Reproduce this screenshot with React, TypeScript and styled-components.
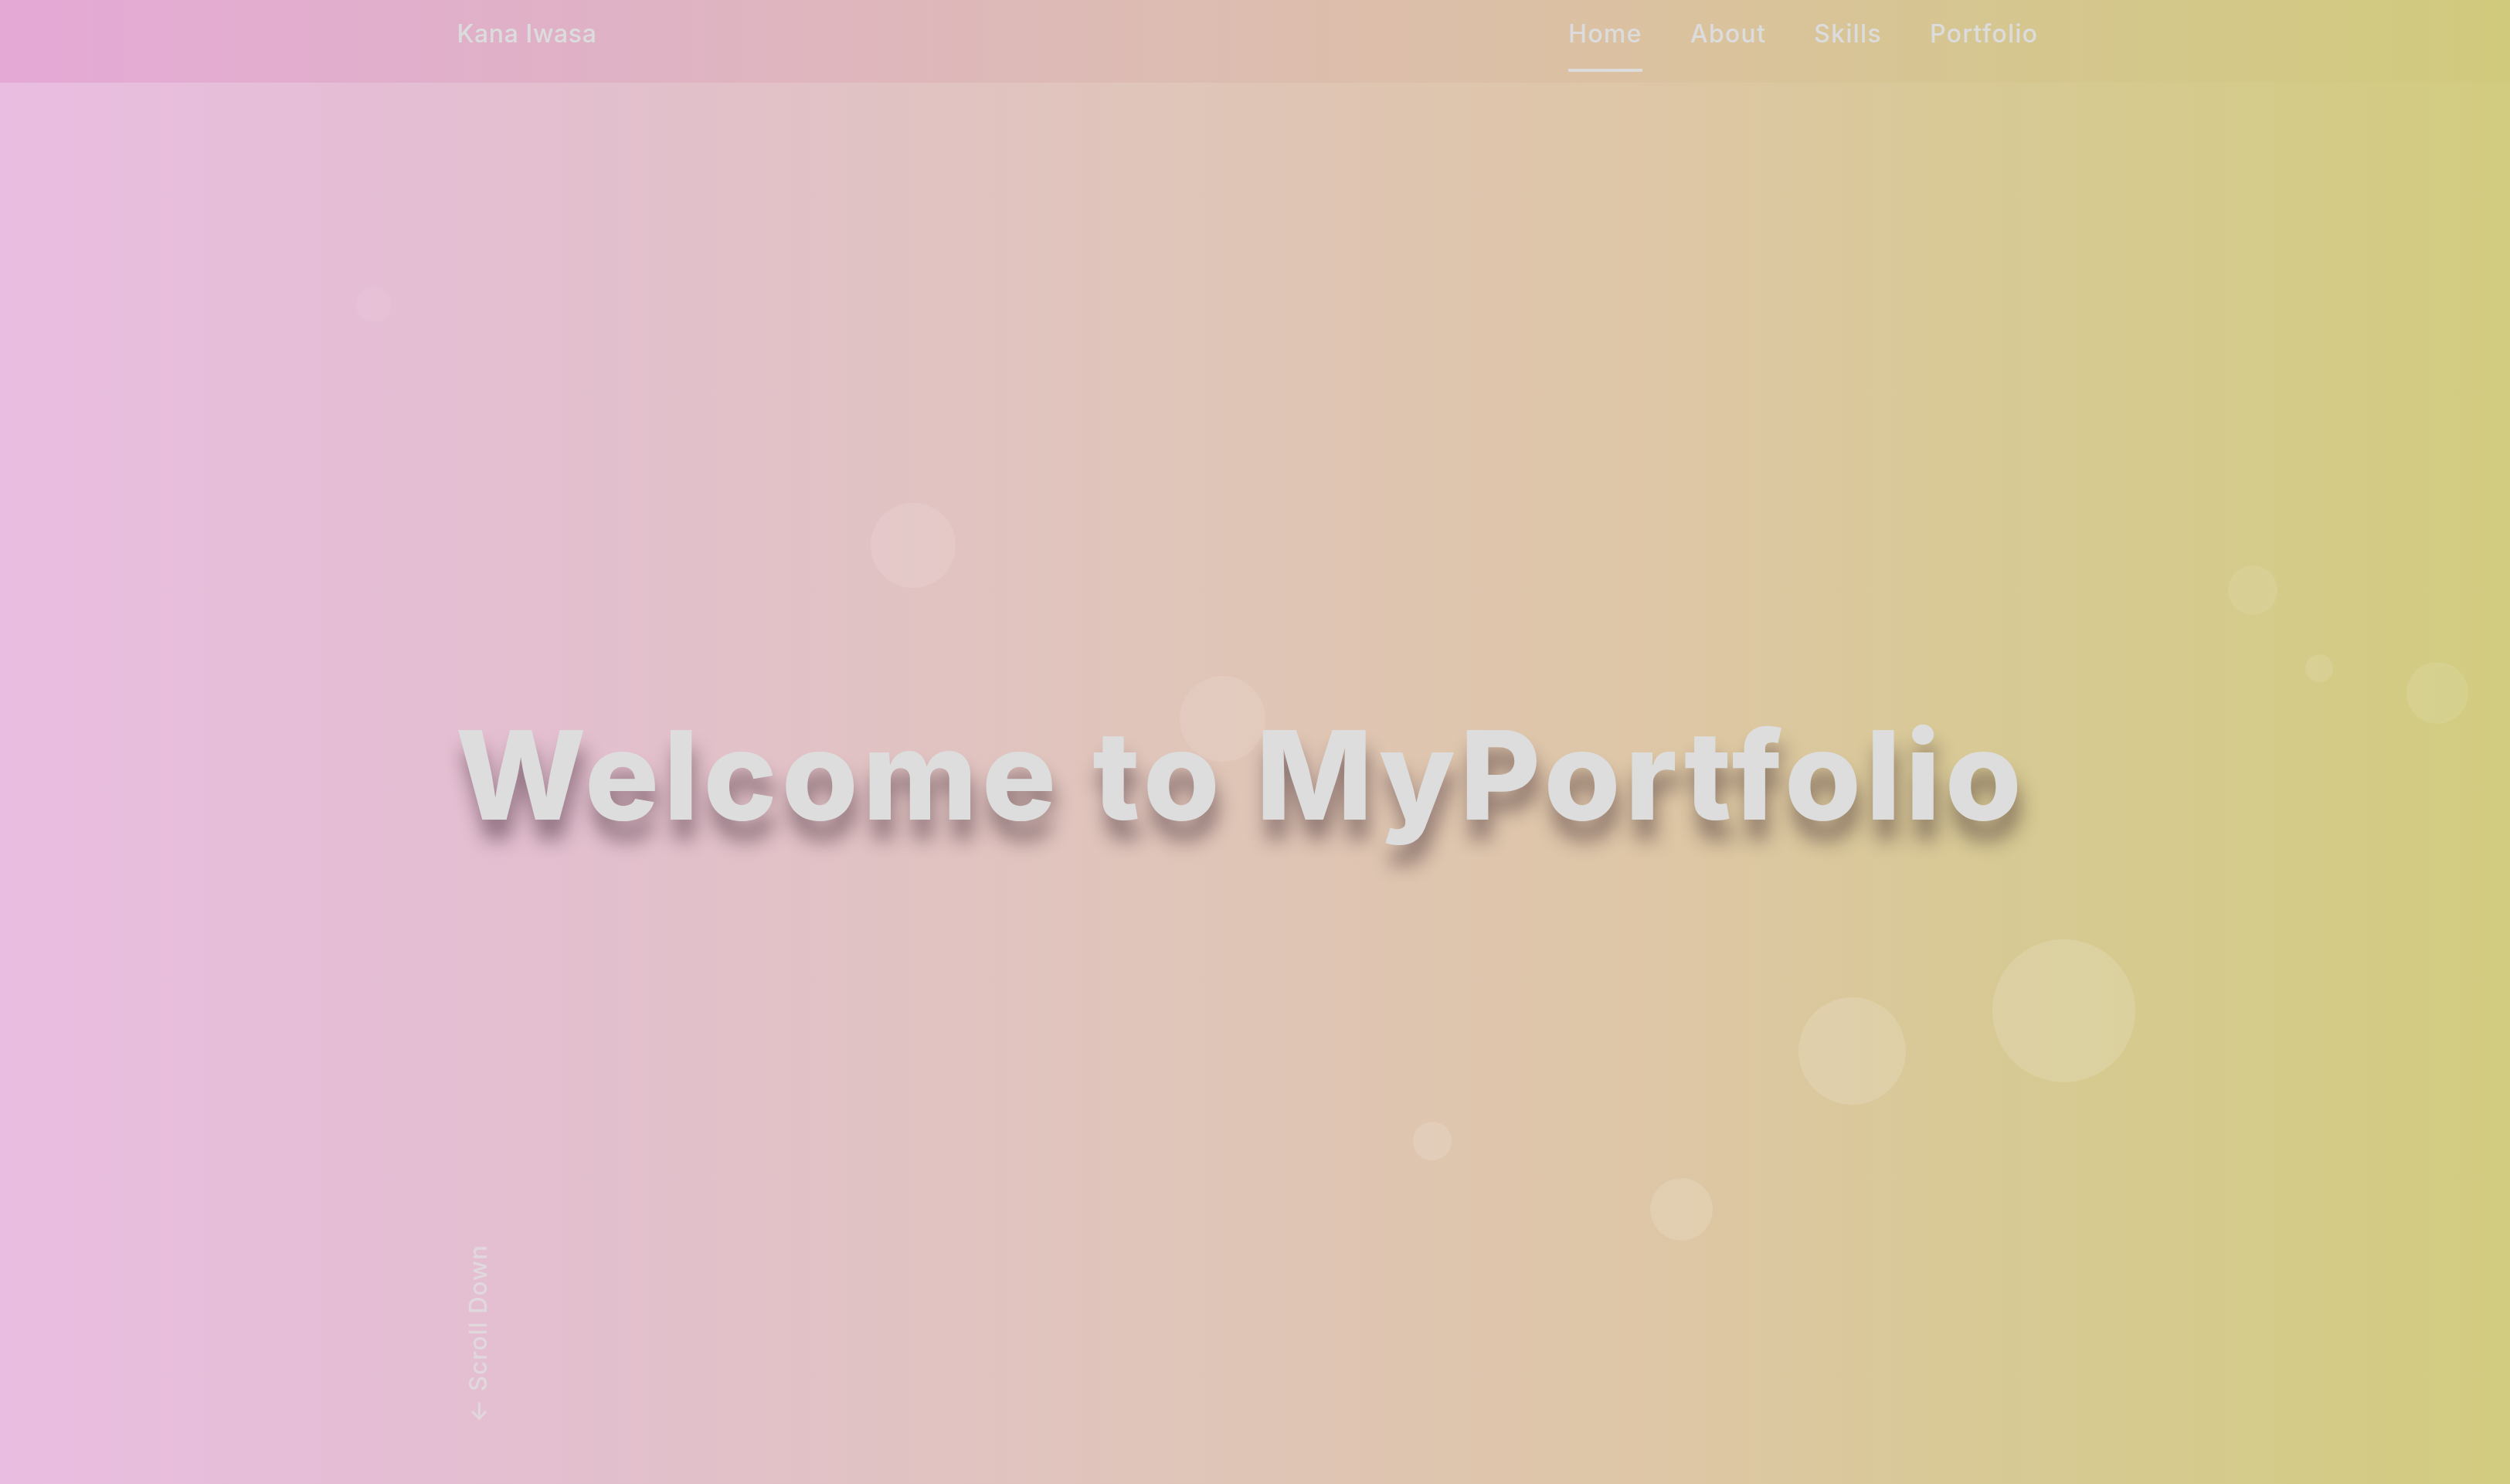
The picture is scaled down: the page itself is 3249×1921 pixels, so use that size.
import React from "react";
import styled, { createGlobalStyle } from "styled-components";

const Global = createGlobalStyle`
  html, body { margin: 0; padding: 0; }
  body {
    font-family: Inter, "Noto Sans", "Liberation Sans", sans-serif;
    overflow: hidden;
  }
  * { box-sizing: border-box; }
`;

const Page = styled.div`
  position: relative;
  width: 100%;
  height: 1921px;
  overflow: hidden;
  display: grid;
  grid-template-rows: 107px 1fr auto;
  background: linear-gradient(
    90deg,
    #e9bde1 0%,
    #e3bfcf 22%,
    #e0c5bb 45%,
    #dec6a7 65%,
    #d8c996 78%,
    #d2cc80 100%
  );
`;

const Header = styled.header`
  position: relative;
  z-index: 2;
  background: linear-gradient(
    90deg,
    rgba(210, 90, 170, 0.2) 0%,
    rgba(200, 110, 130, 0.12) 40%,
    rgba(190, 150, 90, 0.08) 70%,
    rgba(190, 180, 80, 0.06) 100%
  );
`;

const Container = styled.div`
  width: 2070px;
  margin: 0 auto;
`;

const HeaderInner = styled(Container)`
  height: 100%;
  display: flex;
  align-items: flex-start;
  justify-content: space-between;
  padding-right: 21px;
`;

const Logo = styled.a`
  margin-top: 24px;
  margin-left: 2px;
  font-size: 32px;
  font-weight: 500;
  letter-spacing: 0.6px;
  color: #dcdcdc;
  text-decoration: none;
`;

const Nav = styled.nav`
  display: flex;
  gap: 62px;
`;

const NavLink = styled.a<{ $active?: boolean }>`
  position: relative;
  display: block;
  padding-top: 24px;
  height: 93px;
  font-size: 32px;
  font-weight: 500;
  letter-spacing: 1.3px;
  color: #dcdcdc;
  text-decoration: none;
  &::after {
    content: "";
    position: absolute;
    left: 0;
    right: 0;
    bottom: 0;
    height: 4px;
    background: #dcdcdc;
    opacity: ${(p) => (p.$active ? 1 : 0)};
  }
`;

const Main = styled.main`
  position: relative;
  z-index: 1;
  display: flex;
  align-items: flex-start;
  padding-top: 800px;
`;

const Title = styled.h1`
  margin: 0;
  font-size: 160px;
  font-weight: 800;
  line-height: 1.2;
  letter-spacing: 6px;
  color: #dddddd;
  white-space: nowrap;
  text-shadow: 4px 26px 24px rgba(40, 20, 30, 0.42);
`;

const Footer = styled.div`
  position: relative;
  z-index: 1;
  padding-bottom: 76px;
`;

const ScrollDown = styled.span`
  display: inline-block;
  margin-left: 10px;
  writing-mode: vertical-rl;
  transform: rotate(180deg);
  font-size: 31px;
  font-weight: 500;
  letter-spacing: 1.2px;
  color: rgba(225, 225, 225, 0.75);
`;

const Bubble = styled.span<{ $alpha: number }>`
  position: absolute;
  border-radius: 50%;
  background: rgba(255, 255, 255, ${(p) => p.$alpha});
  pointer-events: none;
  z-index: 0;
`;

const bubbles = [
  { x: 484, y: 394, d: 46, a: 0.05 },
  { x: 1182, y: 706, d: 110, a: 0.1 },
  { x: 1582, y: 930, d: 111, a: 0.1 },
  { x: 2916, y: 764, d: 64, a: 0.1 },
  { x: 3002, y: 865, d: 36, a: 0.1 },
  { x: 3155, y: 897, d: 80, a: 0.1 },
  { x: 2671, y: 1308, d: 185, a: 0.14 },
  { x: 2397, y: 1360, d: 139, a: 0.14 },
  { x: 1854, y: 1477, d: 50, a: 0.14 },
  { x: 2176, y: 1565, d: 81, a: 0.14 },
];

export default function App() {
  return (
    <>
      <Global />
      <Page>
        {bubbles.map((b, i) => (
          <Bubble
            key={i}
            $alpha={b.a}
            style={{ left: b.x - b.d / 2, top: b.y - b.d / 2, width: b.d, height: b.d }}
          />
        ))}
        <Header>
          <HeaderInner>
            <Logo href="#">Kana Iwasa</Logo>
            <Nav>
              <NavLink href="#" $active>Home</NavLink>
              <NavLink href="#">About</NavLink>
              <NavLink href="#">Skills</NavLink>
              <NavLink href="#">Portfolio</NavLink>
            </Nav>
          </HeaderInner>
        </Header>
        <Main>
          <Container>
            <Title>Welcome to MyPortfolio</Title>
          </Container>
        </Main>
        <Footer>
          <Container>
            <ScrollDown>← Scroll Down</ScrollDown>
          </Container>
        </Footer>
      </Page>
    </>
  );
}
